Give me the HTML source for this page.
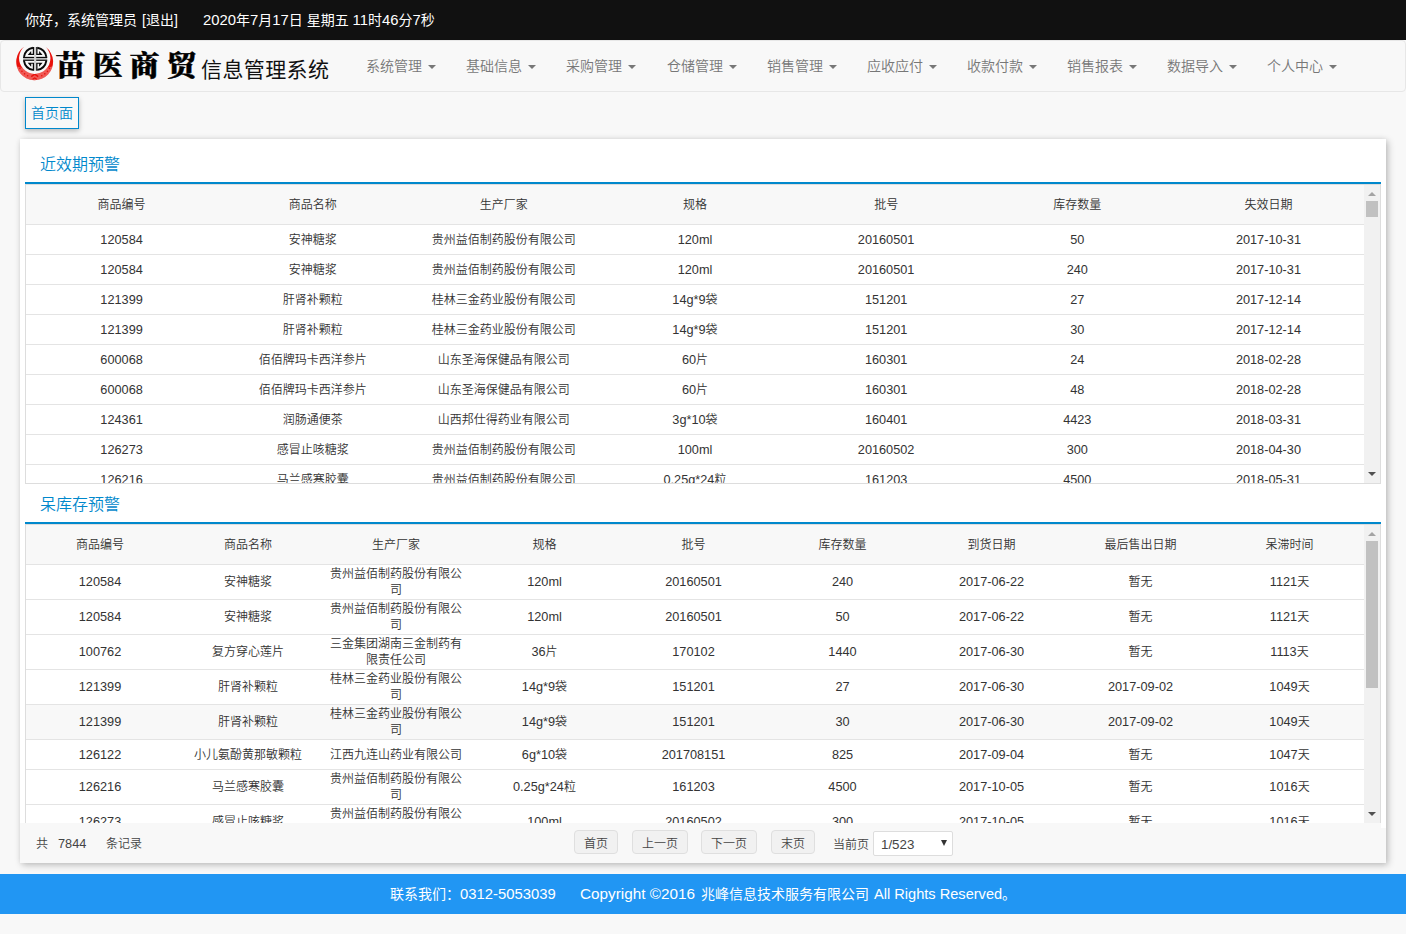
<!DOCTYPE html>
<html lang="zh-CN">
<head>
<meta charset="utf-8">
<title>苗医商贸信息管理系统</title>
<style>
*{box-sizing:border-box;}
html,body{margin:0;padding:0;}
body{width:1406px;height:934px;overflow:hidden;background:#f8f8f8;color:#333;
  font-family:"Liberation Sans","Noto Sans CJK SC",sans-serif;font-size:13px;font-weight:350;position:relative;}
.abs{position:absolute;}
/* top bar */
#topbar{left:0;top:0;width:1406px;height:40px;background:#111;color:#fff;font-weight:400;font-size:14px;line-height:40px;white-space:pre;}
#topbar>span{position:absolute;top:0;}
/* navbar */
#navbar{left:0;top:40px;width:1406px;height:52px;background:#f8f8f8;border:1px solid #e7e7e7;border-radius:4px;}
#logo{left:-1px;top:-1px;width:60px;height:50px;}
.brand1{position:absolute;left:54.5px;top:2.5px;font-family:"Noto Serif CJK SC","Liberation Serif",serif;font-weight:900;font-size:30px;line-height:40px;color:#000;letter-spacing:7px;white-space:nowrap;transform:scaleY(.955);transform-origin:0 0;-webkit-text-stroke:.5px #000;}
.brand2{position:absolute;left:200px;top:9px;font-weight:400;font-family:"Liberation Sans","Noto Sans CJK SC",sans-serif;font-size:21px;line-height:40px;color:#111;white-space:nowrap;letter-spacing:0.4px;}
.menu{position:absolute;top:0;height:50px;line-height:50px;font-size:14px;color:#777;white-space:nowrap;}
.menu i{display:inline-block;width:0;height:0;border-left:4px solid transparent;border-right:4px solid transparent;border-top:4px solid #777;vertical-align:middle;margin-left:6px;position:relative;top:0px;}
/* tab */
#tab{left:25px;top:97px;width:54px;height:32px;border:1px solid #0088cc;background:#f8f8f8;color:#0088cc;font-size:14px;line-height:30px;text-align:center;box-shadow:0 2px 5px rgba(0,0,0,.26);}
/* panel */
#panel{left:20px;top:139px;width:1366px;height:724px;background:#fff;box-shadow:2px 2px 7px 0 rgba(0,0,0,.24),0 0 5px rgba(0,0,0,.06);}
.title{position:absolute;left:20px;font-size:16px;color:#0088cc;line-height:24px;white-space:nowrap;}
.bline{position:absolute;left:5px;width:1356px;height:2px;background:#0088cc;}
.box{position:absolute;left:5px;width:1356px;border:1px solid #ddd;overflow:hidden;background:#fff;}
.sb{position:absolute;right:0;top:0;width:16px;height:100%;background:#f1f1f1;}
.sb .th{position:absolute;left:2px;width:12px;background:#c1c1c1;}
.sb .up,.sb .dn{position:absolute;left:4px;width:0;height:0;border-left:4px solid transparent;border-right:4px solid transparent;}
.sb .up{top:7px;border-bottom:4px solid #a3a3a3;}
.sb .dn{bottom:7px;border-top:4px solid #505050;}
table{border-collapse:collapse;table-layout:fixed;width:1338px;position:absolute;left:0;top:0;}
th,td{text-align:center;font-weight:350;font-size:12px;color:#333;padding:0 8px;border-bottom:1px solid #e4e4e4;line-height:16px;overflow:hidden;}
th{height:39px;background:#f8f8f8;padding-top:2px;}
td{height:30px;}
#t2 td{height:30px;padding:1px 8px 0;line-height:16.5px;}
#t1 td{padding-top:1px;}
tr.hov td{background:#f8f8f8;}
#t2 tr.s td{padding-top:2px;}
.l{font-size:1.06em;}
/* pager */
#pager{left:20px;top:823px;width:1366px;height:40px;background:#f8f8f8;font-size:12px;color:#444;}
#pager>span{position:absolute;white-space:nowrap;line-height:20px;}
.btn{position:absolute;top:7px;height:24px;border:1px solid #dfdfdf;border-radius:4px;background:#f1f1f1;color:#444;font-size:12px;line-height:22px;padding-top:2px;text-align:center;}
.sel{position:absolute;left:853px;top:8px;width:80px;height:25px;border:1px solid #ddd;background:#fff;border-radius:2px;color:#444;font-size:13.33px;line-height:23px;padding-top:1px;padding-left:7px;}
.sel .l{font-size:1em;}
.sel i{position:absolute;right:5px;top:8px;width:0;height:0;border-left:3.5px solid transparent;border-right:3.5px solid transparent;border-top:6px solid #333;}
/* footer */
#footer{left:0;top:874px;width:1406px;height:40px;background:#2196f3;color:#fff;font-weight:400;font-size:14px;line-height:40px;white-space:nowrap;}
#footer>span{position:absolute;top:0;}
#f2 .l,#f4 .l{font-size:1em;}
</style>
</head>
<body>
<div id="topbar" class="abs"><span style="left:25px">你好，系统管理员</span><span style="left:142px">[退出]</span><span style="left:203px"><span class="l">2020</span>年<span class="l">7</span>月<span class="l">17</span>日 星期五 <span class="l">11</span>时<span class="l">46</span>分<span class="l">7</span>秒</span></div>

<div id="navbar" class="abs">
  <svg id="logo" class="abs" viewBox="0 0 60 50">
    <clipPath id="cc"><path d="M24.33,6.46 A18.45,18.45 0 1 0 45.81,7.06 A15.7,15.7 0 1 1 24.33,6.46 Z"/></clipPath>
    <path d="M24.33,6.46 A18.45,18.45 0 1 0 45.81,7.06 A15.7,15.7 0 1 1 24.33,6.46 Z" fill="#e8120c"/>
    <g clip-path="url(#cc)">
      <path d="M10,24.5 L21,27.5 L34.7,32 L48.4,27.5 L60,24.5 L60,50 L10,50 Z" fill="#fff" fill-opacity=".3"/>
      <g fill="#e8120c"><circle cx="50.87" cy="25.15" r=".8"/><circle cx="49.45" cy="28.42" r=".8"/><circle cx="47.42" cy="31.35" r=".8"/><circle cx="44.83" cy="33.84" r=".8"/><circle cx="41.77" cy="35.78" r=".8"/><circle cx="27.63" cy="35.78" r=".8"/><circle cx="24.57" cy="33.84" r=".8"/><circle cx="21.98" cy="31.35" r=".8"/><circle cx="19.95" cy="28.42" r=".8"/><circle cx="18.53" cy="25.15" r=".8"/></g>
      <path d="M31.2,36.6 L34.7,34.2 L38.2,36.6" fill="none" stroke="#e8120c" stroke-width="1.5"/>
      <path d="M32.6,39.2 L34.7,38 L36.8,39.2" fill="none" stroke="#e8120c" stroke-width="1.1"/>
    </g>
    <g transform="translate(35.15,18.85)">
      <rect x="-12" y="-0.8" width="24" height="1.6" fill="#c2c2c2"/>
      <rect x="-1.05" y="-11.8" width="2.1" height="23.6" fill="#d2d2d2"/>
      <g transform="scale(1,1)">
        <path d="M-2.2,-11.1 A11.25,11.25 0 0 0 -11.2,-1.9" fill="none" stroke="#0a0a0a" stroke-width="1.85"/>
        <path d="M-2.35,-11.9 L-1.05,-11.9 L-1.05,-3.95 L-7.45,-3.95 L-4.25,-7.6 L-3.95,-7.6 L-3.95,-5 L-2.35,-5 Z" fill="#0a0a0a"/>
        <path d="M-12.1,-2 L-1.05,-2 L-1.05,-0.8 L-12.1,-0.8 Z" fill="#0a0a0a"/>
      </g>
      <g transform="scale(-1,1)">
        <path d="M-2.2,-11.1 A11.25,11.25 0 0 0 -11.2,-1.9" fill="none" stroke="#0a0a0a" stroke-width="1.85"/>
        <path d="M-2.35,-11.9 L-1.05,-11.9 L-1.05,-3.95 L-7.45,-3.95 L-4.25,-7.6 L-3.95,-7.6 L-3.95,-5 L-2.35,-5 Z" fill="#0a0a0a"/>
        <path d="M-12.1,-2 L-1.05,-2 L-1.05,-0.8 L-12.1,-0.8 Z" fill="#0a0a0a"/>
      </g>
      <g transform="scale(1,-1)">
        <path d="M-2.2,-11.1 A11.25,11.25 0 0 0 -11.2,-1.9" fill="none" stroke="#0a0a0a" stroke-width="1.85"/>
        <path d="M-2.35,-11.9 L-1.05,-11.9 L-1.05,-3.95 L-7.45,-3.95 L-4.25,-7.6 L-3.95,-7.6 L-3.95,-5 L-2.35,-5 Z" fill="#0a0a0a"/>
        <path d="M-12.1,-2 L-1.05,-2 L-1.05,-0.8 L-12.1,-0.8 Z" fill="#0a0a0a"/>
      </g>
      <g transform="scale(-1,-1)">
        <path d="M-2.2,-11.1 A11.25,11.25 0 0 0 -11.2,-1.9" fill="none" stroke="#0a0a0a" stroke-width="1.85"/>
        <path d="M-2.35,-11.9 L-1.05,-11.9 L-1.05,-3.95 L-7.45,-3.95 L-4.25,-7.6 L-3.95,-7.6 L-3.95,-5 L-2.35,-5 Z" fill="#0a0a0a"/>
        <path d="M-12.1,-2 L-1.05,-2 L-1.05,-0.8 L-12.1,-0.8 Z" fill="#0a0a0a"/>
      </g>
    </g>
  </svg>
  <div class="brand1">苗医商贸</div>
  <div class="brand2">信息管理系统</div>
  <div class="menu" style="left:365px">系统管理<i></i></div>
  <div class="menu" style="left:465px">基础信息<i></i></div>
  <div class="menu" style="left:565px">采购管理<i></i></div>
  <div class="menu" style="left:666px">仓储管理<i></i></div>
  <div class="menu" style="left:766px">销售管理<i></i></div>
  <div class="menu" style="left:866px">应收应付<i></i></div>
  <div class="menu" style="left:966px">收款付款<i></i></div>
  <div class="menu" style="left:1066px">销售报表<i></i></div>
  <div class="menu" style="left:1166px">数据导入<i></i></div>
  <div class="menu" style="left:1266px">个人中心<i></i></div>
</div>

<div id="tab" class="abs">首页面</div>

<div id="panel" class="abs">
  <div class="title" style="top:14px">近效期预警</div>
  <div class="bline" style="top:43px"></div>
  <div class="box" id="b1" style="top:45px;height:300px;">
    <table id="t1">
      <tr><th>商品编号</th><th>商品名称</th><th>生产厂家</th><th>规格</th><th>批号</th><th>库存数量</th><th>失效日期</th></tr>
      <tr><td><span class="l">120584</span></td><td>安神糖浆</td><td>贵州益佰制药股份有限公司</td><td><span class="l">120ml</span></td><td><span class="l">20160501</span></td><td><span class="l">50</span></td><td><span class="l">2017-10-31</span></td></tr>
      <tr><td><span class="l">120584</span></td><td>安神糖浆</td><td>贵州益佰制药股份有限公司</td><td><span class="l">120ml</span></td><td><span class="l">20160501</span></td><td><span class="l">240</span></td><td><span class="l">2017-10-31</span></td></tr>
      <tr><td><span class="l">121399</span></td><td>肝肾补颗粒</td><td>桂林三金药业股份有限公司</td><td><span class="l">14g*9</span>袋</td><td><span class="l">151201</span></td><td><span class="l">27</span></td><td><span class="l">2017-12-14</span></td></tr>
      <tr><td><span class="l">121399</span></td><td>肝肾补颗粒</td><td>桂林三金药业股份有限公司</td><td><span class="l">14g*9</span>袋</td><td><span class="l">151201</span></td><td><span class="l">30</span></td><td><span class="l">2017-12-14</span></td></tr>
      <tr><td><span class="l">600068</span></td><td>佰佰牌玛卡西洋参片</td><td>山东圣海保健品有限公司</td><td><span class="l">60</span>片</td><td><span class="l">160301</span></td><td><span class="l">24</span></td><td><span class="l">2018-02-28</span></td></tr>
      <tr><td><span class="l">600068</span></td><td>佰佰牌玛卡西洋参片</td><td>山东圣海保健品有限公司</td><td><span class="l">60</span>片</td><td><span class="l">160301</span></td><td><span class="l">48</span></td><td><span class="l">2018-02-28</span></td></tr>
      <tr><td><span class="l">124361</span></td><td>润肠通便茶</td><td>山西邦仕得药业有限公司</td><td><span class="l">3g*10</span>袋</td><td><span class="l">160401</span></td><td><span class="l">4423</span></td><td><span class="l">2018-03-31</span></td></tr>
      <tr><td><span class="l">126273</span></td><td>感冒止咳糖浆</td><td>贵州益佰制药股份有限公司</td><td><span class="l">100ml</span></td><td><span class="l">20160502</span></td><td><span class="l">300</span></td><td><span class="l">2018-04-30</span></td></tr>
      <tr><td><span class="l">126216</span></td><td>马兰感寒胶囊</td><td>贵州益佰制药股份有限公司</td><td><span class="l">0.25g*24</span>粒</td><td><span class="l">161203</span></td><td><span class="l">4500</span></td><td><span class="l">2018-05-31</span></td></tr>
    </table>
    <div class="sb"><div class="up"></div><div class="th" style="top:16px;height:16px"></div><div class="dn"></div></div>
  </div>

  <div class="title" style="top:354px">呆库存预警</div>
  <div class="bline" style="top:383px"></div>
  <div class="box" id="b2" style="top:385px;height:300px;">
    <table id="t2">
      <colgroup><col style="width:148px"><col style="width:148px"><col style="width:148px"><col style="width:149px"><col style="width:149px"><col style="width:149px"><col style="width:149px"><col style="width:149px"><col style="width:149px"></colgroup>
      <tr><th>商品编号</th><th>商品名称</th><th>生产厂家</th><th>规格</th><th>批号</th><th>库存数量</th><th>到货日期</th><th>最后售出日期</th><th>呆滞时间</th></tr>
      <tr><td><span class="l">120584</span></td><td>安神糖浆</td><td>贵州益佰制药股份有限公司</td><td><span class="l">120ml</span></td><td><span class="l">20160501</span></td><td><span class="l">240</span></td><td><span class="l">2017-06-22</span></td><td>暂无</td><td><span class="l">1121</span>天</td></tr>
      <tr><td><span class="l">120584</span></td><td>安神糖浆</td><td>贵州益佰制药股份有限公司</td><td><span class="l">120ml</span></td><td><span class="l">20160501</span></td><td><span class="l">50</span></td><td><span class="l">2017-06-22</span></td><td>暂无</td><td><span class="l">1121</span>天</td></tr>
      <tr><td><span class="l">100762</span></td><td>复方穿心莲片</td><td>三金集团湖南三金制药有限责任公司</td><td><span class="l">36</span>片</td><td><span class="l">170102</span></td><td><span class="l">1440</span></td><td><span class="l">2017-06-30</span></td><td>暂无</td><td><span class="l">1113</span>天</td></tr>
      <tr><td><span class="l">121399</span></td><td>肝肾补颗粒</td><td>桂林三金药业股份有限公司</td><td><span class="l">14g*9</span>袋</td><td><span class="l">151201</span></td><td><span class="l">27</span></td><td><span class="l">2017-06-30</span></td><td><span class="l">2017-09-02</span></td><td><span class="l">1049</span>天</td></tr>
      <tr class="hov"><td><span class="l">121399</span></td><td>肝肾补颗粒</td><td>桂林三金药业股份有限公司</td><td><span class="l">14g*9</span>袋</td><td><span class="l">151201</span></td><td><span class="l">30</span></td><td><span class="l">2017-06-30</span></td><td><span class="l">2017-09-02</span></td><td><span class="l">1049</span>天</td></tr>
      <tr class="s"><td><span class="l">126122</span></td><td>小儿氨酚黄那敏颗粒</td><td>江西九连山药业有限公司</td><td><span class="l">6g*10</span>袋</td><td><span class="l">201708151</span></td><td><span class="l">825</span></td><td><span class="l">2017-09-04</span></td><td>暂无</td><td><span class="l">1047</span>天</td></tr>
      <tr><td><span class="l">126216</span></td><td>马兰感寒胶囊</td><td>贵州益佰制药股份有限公司</td><td><span class="l">0.25g*24</span>粒</td><td><span class="l">161203</span></td><td><span class="l">4500</span></td><td><span class="l">2017-10-05</span></td><td>暂无</td><td><span class="l">1016</span>天</td></tr>
      <tr><td><span class="l">126273</span></td><td>感冒止咳糖浆</td><td>贵州益佰制药股份有限公司</td><td><span class="l">100ml</span></td><td><span class="l">20160502</span></td><td><span class="l">300</span></td><td><span class="l">2017-10-05</span></td><td>暂无</td><td><span class="l">1016</span>天</td></tr>
    </table>
    <div class="sb"><div class="up"></div><div class="th" style="top:16px;height:147px"></div><div class="dn"></div></div>
  </div>
</div>

<div id="pager" class="abs">
  <span style="left:16px;top:10.5px">共</span><span style="left:38px;top:10.5px"><span class="l">7844</span></span><span style="left:86px;top:10.5px">条记录</span>
  <div class="btn" style="left:554px;width:44px">首页</div>
  <div class="btn" style="left:612px;width:56px">上一页</div>
  <div class="btn" style="left:681px;width:56px">下一页</div>
  <div class="btn" style="left:751px;width:44px">末页</div>
  <span style="left:813px;top:11.5px">当前页</span>
  <div class="sel"><span class="l">1/523</span><i></i></div>
  <div style="position:absolute;left:1361px;top:0;width:5px;height:5px;background:#fff"></div>
</div>

<div id="footer" class="abs"><span style="left:390px">联系我们：<span class="l">0312-5053039</span></span><span id="f2" style="left:580px;font-size:15.3px"><span class="l">Copyright ©2016</span></span><span id="f3" style="left:701px">兆峰信息技术服务有限公司</span><span id="f4" style="left:874px;font-size:14.6px"><span class="l">All Rights Reserved</span></span><span id="f5" style="left:1002px;font-size:14px">。</span></div>
</body>
</html>
